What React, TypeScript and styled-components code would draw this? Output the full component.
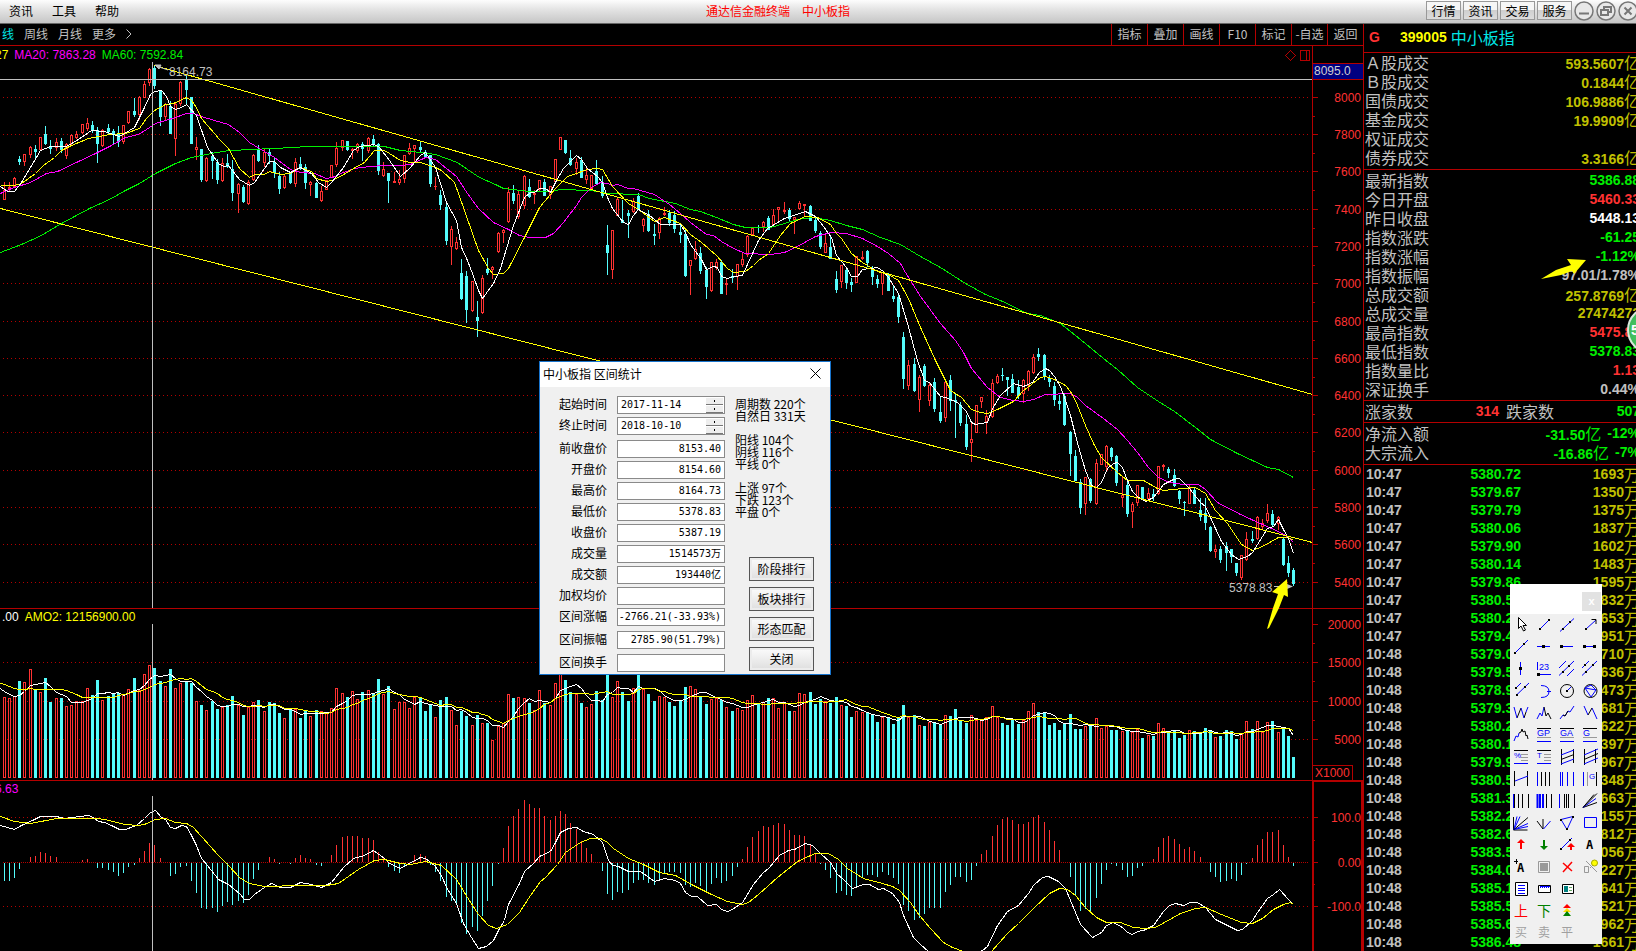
import React from "react";
import styled, { createGlobalStyle } from "styled-components";

/* ---------- market data, in chart units ---------- */

// One candle per entry: direction, high, body top, body bottom, low.
const CANDLES = `
u182 190 200 200|u182 187 189 191|u177 178 187 188|d156 159 162 165|u154 154 162 166|u146 147 155 158|d145 149 152 158|u137 137 150 150
d126 134 144 145|d140 147 149 154|u138 142 148 151|d138 141 150 153|u143 144 156 159|u134 135 144 145|u131 134 138 139|u124 124 133 134
u118 123 129 131|d121 125 130 133|d127 130 144 163|u129 130 146 147|d124 128 132 135|d129 131 134 144|d126 134 142 147|u125 125 142 144
u111 111 123 124|d98 111 115 117|u96 97 115 120|u81 84 98 98|u68 69 83 86|d65 68 86 89|d90 90 117 126|u103 104 117 120
d101 106 134 134|u103 104 139 156|u81 82 104 106|d76 80 90 105|d97 97 144 144|u137 147 150 160|d149 149 180 182|u157 158 181 182
d152 156 161 179|d159 162 180 184|u158 163 181 182|d154 163 167 168|d160 169 193 201|u183 184 194 213|d185 187 202 203|u180 182 204 205
u154 155 180 181|d145 150 161 162|u149 152 163 167|d148 152 156 164|d158 162 173 178|d172 176 189 194|u175 176 188 189|d172 173 183 184
u158 162 184 187|d157 164 168 170|d164 167 183 189|u181 182 185 196|d182 183 198 198|u186 191 201 202|u180 180 190 190|u165 165 178 178
u142 148 165 167|u140 140 148 151|d141 141 150 151|u148 149 151 159|u143 144 151 153|d142 144 149 161|u137 138 151 153|d135 139 144 146
d143 144 171 175|u162 169 176 177|d173 173 181 203|u172 181 183 183|u170 179 183 185|u155 155 179 183|u143 148 154 155|u145 145 149 163
d141 147 150 152|d150 152 157 157|d155 155 184 187|u177 186 187 190|d190 195 205 210|d202 207 241 245|u226 229 247 265|u237 242 249 250
d259 273 299 300|d271 276 310 323|u281 281 311 312|d301 317 321 337|u275 278 313 314|d258 269 273 275|u266 267 270 279|u232 233 252 253
u229 230 233 243|u187 192 222 223|d185 193 201 204|u190 194 217 219|u175 176 206 209|d179 187 197 198|u190 193 195 204|u180 180 190 191
d179 182 196 196|u186 186 195 199|u159 159 182 183|u137 137 150 150|d140 140 153 154|d150 158 165 166|u158 162 169 175|d157 160 178 178
u168 175 180 184|u175 175 189 189|d160 171 184 184|d176 183 196 198|d225 245 253 275|u230 230 270 279|u198 199 216 216|d200 220 223 223
d210 213 216 238|u198 201 212 213|d193 196 210 210|u218 219 226 232|d210 214 231 232|d224 234 236 245|u217 218 233 239|u207 213 215 216
d210 213 223 226|d211 215 229 233|d225 232 235 243|d229 234 276 277|u260 260 266 295|u241 249 259 260|d247 253 271 274|d267 270 287 299
u262 262 291 292|u259 262 267 270|d260 262 294 294|u278 283 285 295|d269 276 278 283|u264 264 277 290|u253 259 265 267|u235 236 255 257
u228 228 235 235|d225 227 228 233|u221 222 227 232|d216 218 230 230|u209 215 225 225|u207 207 210 222|u202 210 212 214|d208 210 219 221
u217 217 220 234|u201 203 209 210|u204 204 206 216|d205 206 221 221|d216 220 231 233|d231 233 247 249|u234 243 253 253|d235 247 259 259
d271 279 290 293|u265 265 282 288|d268 270 283 289|d278 282 285 292|u256 256 283 283|u251 257 259 260|d250 251 263 267|d266 268 277 285
d275 279 284 288|u272 272 284 295|d273 275 291 291|d285 296 299 302|d295 297 317 323|d332 337 379 389|u360 365 386 390|d358 364 391 392
u375 377 400 412|d364 366 386 387|u382 385 401 406|d378 382 409 412|d397 412 421 423|u380 382 418 422|d375 380 401 411|d394 400 402 438
d402 405 423 426|d415 424 447 450|u422 439 443 462|u405 405 433 433|u397 397 402 408|u410 416 422 434|u379 383 417 418|u374 376 383 384
d368 375 376 381|d377 377 380 396|d374 379 393 393|d380 387 396 399|u379 380 394 403|u370 371 386 391|u354 357 373 374|d348 354 357 361
d354 355 376 380|d375 378 382 387|d382 386 400 406|d395 401 404 410|d393 396 425 426|d431 432 454 476|d450 456 481 481|d479 482 508 514
u477 477 504 515|d478 479 501 503|u459 463 504 505|u454 454 465 465|u445 446 467 470|d447 448 457 461|d455 456 483 486|u476 495 498 507
d482 485 514 517|u502 504 512 528|u485 485 503 506|d487 487 500 500|u488 493 499 500|d489 494 497 501|u466 466 494 495|u464 465 467 471
d467 469 473 478|d469 475 486 487|d490 491 499 504|d501 502 503 516|u484 487 504 504|d488 490 504 504|d498 510 517 521|d498 513 523 530
d526 527 551 552|u545 549 552 558|d546 549 560 563|d542 546 553 571|d549 549 557 563|d563 563 573 576|u555 555 578 580|u532 539 560 561
d531 539 541 543|u516 517 539 540|u519 523 527 529|u504 513 521 523|d510 514 525 526|u516 517 524 530|d537 539 565 566|d556 563 573 577
d568 570 584 586`
  .trim()
  .split(/[|\n]/)
  .map((c) => ({ up: c[0] === "u", v: c.slice(1).split(" ").map(Number) }));

// Turnover of the ten sessions before the first visible one, then the visible ones.
const EARLIER = [676, 676, 676, 676, 676, 680, 683, 685, 685, 704];
const VOLUME = `697 698 696 681 682 669 690 692 678 702 698 698 706 705 701 701 688 695 680 700 696 693 693 695 689 678 690 674 665 668
681 686 669 688 683 681 683 701 705 710 701 709 707 705 696 705 715 707 702 700 711 702 703 713 718 710 709 718 711 716
710 711 713 708 688 693 697 691 699 692 690 693 679 694 686 709 702 702 708 697 697 711 705 717 700 697 710 725 711 716
725 715 723 723 740 726 723 694 698 697 698 703 710 690 703 705 683 670 680 692 694 703 707 704 691 700 668 697 681 692
701 688 670 689 694 701 696 697 702 706 701 687 686 689 696 704 699 698 700 707 711 708 710 700 695 704 702 698 698 708
703 711 711 693 694 692 704 699 701 703 697 705 706 717 711 712 713 715 722 717 718 724 717 705 717 715 725 726 722 723
725 715 716 709 721 723 715 720 720 717 706 717 723 725 719 724 720 711 703 712 713 725 723 730 724 714 729 729 726 726
718 728 726 730 730 731 731 732 729 738 735 736 723 728 732 731 738 735 730 731 733 728 730 737 736 730 731 739 734 721
729 721 732 722 721 732 728 736 757`
  .split(/\s+/)
  .map(Number);

const MACD = `-18 -18 -15 -6 0 5 6 10 9 6 5 0 0 0 0 2 3 0 -5 -5 -7 -9 -13 -10 -4 -2 4 11 19 17 4 0 -13 -11 -4 -3 -18 -30 -45 -46
-45 -49 -43 -39 -42 -38 -40 -32 -16 -7 0 5 3 -1 0 -1 4 7 4 3 -2 -3 0 7 17 25 26 26 26 24 24 22 10 4 -4 -8 -10 -4 0 7
8 6 -2 -9 -18 -34 -38 -42 -60 -71 -64 -68 -53 -38 -23 -1 14 36 46 53 62 58 54 54 46 42 46 51 48 39 33 21 14 8 0 -8 -31
-37 -29 -30 -27 -20 -17 -17 -20 -22 -17 -10 -9 -9 -10 -22 -24 -20 -23 -28 -21 -15 -20 -18 -13 -4 3 15 25 31 36 35 37 39
38 32 27 27 26 18 9 -1 -7 -15 -30 -28 -32 -33 -24 -15 -12 -12 -14 -9 -12 -15 -21 -42 -48 -57 -55 -51 -45 -45 -45 -29 -22
-14 -14 -19 -17 -3 8 12 26 37 43 45 42 38 38 40 45 47 40 32 21 12 0 -14 -32 -48 -46 -48 -35 -21 -7 -1 -3 -7 -14 -13 -5
-3 0 3 15 24 26 23 18 13 15 11 5 0 -9 -14 -19 -18 -16 -18 -12 -1 4 17 23 30 30 32 17 5 -3`
  .split(/\s+/)
  .map(Number);

const MA5 =
  "0,186 7,191 14,191 21,182 30,167 40,150 50,146 66,146 78,139 91,130 104,131 119,136 134,127 144,107 150,94 154,91 161,90 166,96 170,106 175,109 181,107 186,104 196,115 207,147 218,163 223,166 228,165 239,179 249,185 254,182 264,168 269,161 274,161 280,167 290,172 300,167 311,173 318,182 326,187 331,182 343,167 353,150 359,146 374,144 379,147 389,160 400,176 410,167 420,155 425,152 435,167 446,202 456,220 461,247 467,260 472,273 478,290 482,298 493,283 500,268 513,225 524,197 530,192 534,192 539,188 545,188 550,192 555,182 563,168 576,155 581,159 587,168 597,176 602,182 607,197 612,208 623,222 628,224 633,215 638,209 649,215 660,224 680,224 685,232 690,244 701,259 706,269 713,266 717,267 721,276 727,278 733,276 742,275 747,264 758,240 767,228 784,218 805,211 815,216 820,222 831,237 836,255 846,267 851,276 857,276 862,269 877,267 883,271 888,277 898,293 907,323 917,360 924,380 929,382 940,396 945,397 957,402 966,411 971,422 975,424 987,422 992,408 1000,395 1013,383 1023,386 1032,382 1039,372 1045,368 1049,370 1054,376 1060,386 1065,400 1070,415 1075,435 1080,453 1085,470 1091,485 1096,487 1101,482 1107,468 1113,463 1117,462 1122,467 1127,480 1132,491 1137,496 1145,501 1153,497 1163,484 1173,479 1179,478 1189,488 1200,502 1205,506 1210,517 1215,528 1221,541 1231,554 1238,559 1247,556 1252,552 1262,536 1267,528 1273,526 1278,519 1283,529 1288,538 1293,553";
const MA10 =
  "0,185 14,185 21,183 35,173 43,165 54,157 61,150 71,145 88,138 109,134 125,133 139,128 146,118 154,110 165,104 173,103 186,97 191,100 196,107 201,118 214,133 219,139 228,148 239,168 249,177 254,174 264,174 269,171 280,174 290,173 300,167 311,171 316,178 326,181 332,180 345,173 353,168 364,162 374,150 384,150 389,153 400,160 410,162 420,162 435,167 441,170 454,182 464,210 472,233 478,250 488,268 493,274 503,273 508,268 524,237 539,207 555,188 567,176 576,173 587,169 597,168 602,169 612,186 628,203 638,209 654,221 664,217 680,223 690,234 701,242 716,255 727,268 733,272 745,271 753,265 758,260 768,253 780,235 790,223 805,216 817,217 830,224 836,233 841,238 851,253 862,262 877,271 888,274 898,280 908,298 920,327 935,360 945,380 950,390 961,397 971,409 980,412 987,413 997,409 1013,401 1023,390 1040,377 1045,376 1054,379 1065,385 1070,391 1075,400 1085,425 1093,443 1101,457 1117,472 1127,480 1143,480 1157,488 1163,490 1183,488 1195,487 1205,493 1215,510 1227,523 1241,544 1252,550 1262,546 1278,537 1288,537 1293,540";
const MA20 =
  "0,193 11,188 30,182 46,173 57,171 78,161 93,154 109,146 125,137 138,134 146,129 155,123 165,120 175,117 186,113 193,113 201,116 214,120 228,124 239,132 249,142 264,151 274,157 290,169 300,172 314,173 326,178 332,177 343,172 354,168 369,166 384,165 400,165 410,164 421,159 425,157 435,159 446,168 456,176 467,193 478,208 493,222 508,229 519,235 529,237 545,237 553,233 563,222 576,205 581,197 591,187 600,182 607,183 612,185 617,184 628,188 633,188 647,192 654,194 669,204 680,213 690,222 706,234 713,235 721,241 733,248 745,253 770,254 784,252 797,246 815,236 831,232 846,233 862,238 877,246 888,253 900,263 905,272 920,296 940,323 955,340 963,352 971,368 987,387 1000,397 1013,400 1023,401 1033,399 1045,394 1070,393 1077,397 1085,405 1103,418 1117,429 1127,440 1137,452 1148,467 1158,477 1169,482 1183,484 1198,484 1205,489 1217,502 1240,514 1262,524 1280,532 1288,537 1293,542";
const MA60 =
  "0,252 21,244 39,236 61,223 89,208 109,199 125,190 139,183 155,173 175,163 191,157 211,153 228,150 254,149 269,148 296,147 304,146 384,146 400,150 421,152 435,154 446,158 457,162 467,169 479,177 495,184 503,188 529,191 550,191 560,189 591,190 607,193 638,194 649,198 675,203 690,209 700,211 716,217 733,224 745,227 770,227 784,223 797,219 813,217 830,220 846,225 862,229 880,237 900,244 920,256 940,267 965,283 985,294 1000,300 1027,313 1040,315 1060,323 1080,339 1103,358 1117,369 1137,387 1158,401 1174,411 1195,427 1210,439 1237,453 1267,467 1278,469 1293,477";
const DIF =
  "0,825 7,827 14,829 21,825 32,820 40,816 56,816 64,818 88,815 93,817 98,821 104,822 111,825 119,829 125,829 136,825 144,818 150,812 155,810 161,817 165,819 170,827 175,828 181,825 186,826 191,835 196,845 201,858 207,865 218,879 228,884 239,893 244,899 249,899 254,894 264,887 271,883 280,887 290,887 300,882 311,884 321,887 331,882 343,867 353,858 364,855 373,850 384,858 389,863 400,868 407,864 420,857 425,858 434,865 441,875 446,887 456,903 463,923 471,937 478,948 486,946 493,940 498,930 504,920 508,904 519,883 524,871 534,862 539,856 550,851 555,842 560,832 568,828 576,827 583,831 593,834 602,842 608,860 612,865 618,866 628,871 640,871 654,881 664,878 675,880 680,883 685,892 691,896 697,896 707,905 716,904 721,909 727,911 732,909 742,902 753,884 763,872 768,868 779,855 788,850 794,849 805,843 812,845 820,853 830,862 837,874 842,878 852,888 863,884 869,884 878,889 883,888 892,893 899,902 903,915 913,937 920,944 928,951 940,956 970,956 982,950 987,946 997,925 1007,911 1018,905 1028,893 1033,885 1042,877 1048,876 1058,881 1065,888 1070,900 1075,912 1080,924 1092,937 1101,932 1106,925 1113,922 1122,927 1127,932 1132,934 1137,931 1143,930 1153,925 1163,911 1169,905 1175,903 1183,905 1190,902 1197,902 1205,907 1215,919 1227,925 1237,930 1242,929 1252,920 1257,912 1267,898 1273,894 1279,889 1288,899 1293,904";
const DEA =
  "0,816 14,821 30,823 56,818 98,818 109,820 124,824 138,825 144,824 155,819 165,818 175,822 186,823 193,827 201,836 218,855 228,865 239,877 249,883 264,886 300,885 326,885 338,883 358,869 374,860 384,859 400,863 410,864 425,861 441,865 456,879 467,897 478,914 488,925 496,928 507,924 519,912 530,895 540,881 545,877 557,864 565,852 580,842 590,838 600,838 607,842 613,848 628,858 643,864 659,872 675,875 693,885 711,894 727,901 742,904 748,902 758,894 777,877 797,861 810,855 815,853 828,853 838,859 847,868 863,878 882,883 892,886 899,890 910,902 919,915 930,928 943,942 952,947 963,951 975,954 991,951 1007,933 1018,923 1033,908 1049,893 1059,888 1067,889 1075,895 1085,907 1096,917 1106,922 1120,922 1133,927 1145,928 1155,927 1180,913 1195,908 1205,907 1221,914 1241,922 1252,923 1262,918 1273,909 1283,904 1290,902 1293,904";

const candleX = (i: number) => Math.floor(4 + 5.2 * i);

const averageLine = (days: number) => {
  const all = [...EARLIER, ...VOLUME];
  const points: string[] = [];
  for (let i = -1; i < VOLUME.length; i++) {
    const end = i + EARLIER.length + 1;
    const window = all.slice(end - days, end);
    const mean = window.reduce((a, b) => a + b, 0) / days;
    points.push(`${candleX(i)},${Math.round(mean)}`);
  }
  return points.join(" ");
};

const RED = "#ff3232";
const AXIS = "#b40000";
const CYAN = "#54fcfc";
const YELLOW = "#ffff00";
const MAGENTA = "#ff00ff";
const GREEN = "#00f000";
const GREY = "#c0c0c0";

/* ---------- styled parts ---------- */

const CJK = `"Noto Sans CJK SC", sans-serif`;

const Global = createGlobalStyle`
  * { box-sizing: border-box; }
  body { margin: 0; background: #000; font: 12px/16px ${CJK}; }
  button, input { font: inherit; margin: 0; }
  dl, dd, dt, h1, h2, p { margin: 0; font: inherit; }
`;

const Screen = styled.div`
  position: relative;
  height: 100vh;
  overflow: hidden;
  display: flex;
  flex-direction: column;
  background: #000;
`;

const TopBar = styled.header`
  flex: 0 0 24px;
  display: flex;
  align-items: center;
  padding-bottom: 2px;
  border-bottom: 1px solid #666;
  background: linear-gradient(#fdfdfd, #e4e4e4 40%, #c6c6c6);
`;

const Menu = styled.nav`
  flex: 0 0 130px;
  display: flex;
  gap: 19px;
  padding-left: 9px;
`;

const MenuButton = styled.button`
  border: 0;
  padding: 0;
  background: none;
  color: #000;
`;

const Title = styled.h1`
  flex: 1;
  display: flex;
  justify-content: center;
  gap: 12px;
  color: #f00;
`;

const TopActions = styled.div`
  display: flex;
  gap: 2px;
  margin-right: -2px;
  align-items: center;
`;

const TopButton = styled.button`
  width: 35px;
  height: 19px;
  border: 1px solid #999;
  padding: 0;
  line-height: 16px;
  color: #000;
  background: linear-gradient(#f6f6f6 50%, #cfcfcf 50%, #dcdcdc);
`;

const RoundButton = styled.button`
  width: 20px;
  height: 20px;
  border: 0;
  padding: 0;
  background: none;
  svg { display: block; }
`;

const Body = styled.div`
  flex: 1;
  min-height: 0;
  display: flex;
`;

const ChartColumn = styled.main`
  flex: 1;
  min-width: 0;
  display: grid;
  grid-template-rows: 22px minmax(0, 562fr) minmax(0, 172fr) minmax(0, 171fr);
`;

const Toolbar = styled.div`
  display: flex;
  justify-content: space-between;
  border-bottom: 1px solid ${AXIS};
`;

const Periods = styled.div`
  display: flex;
  align-items: center;
  gap: 10px;
  padding: 0 0 2px 2px;
`;

const PeriodButton = styled.button<{ $active?: boolean }>`
  border: 0;
  padding: 0;
  background: none;
  color: ${(p) => (p.$active ? "#00e6e6" : GREY)};
  svg { display: block; }
`;

const Tools = styled.div`
  display: flex;
`;

const ToolButton = styled.button`
  width: 36px;
  border: 0;
  border-left: 1px solid ${AXIS};
  padding: 0 0 2px;
  background: none;
  color: ${GREY};
  line-height: 16px;
  white-space: nowrap;
`;

const Pane = styled.section`
  position: relative;
  min-height: 0;
`;

const Legend = styled.div<{ $shift?: number }>`
  position: absolute;
  top: 0;
  left: 0;
  display: flex;
  gap: 6px;
  margin-left: ${(p) => p.$shift ?? 0}px;
  font: 12px/18px "Liberation Sans", sans-serif;
`;

const Ink = styled.span<{ $color: string }>`
  color: ${(p) => p.$color};
`;

const Plot = styled.svg`
  display: block;
  width: 100%;
  height: 100%;
  font: 12px "Liberation Sans", sans-serif;
`;

const Side = styled.aside`
  flex: 0 0 273px;
  overflow: hidden;
  border-left: 1px solid ${AXIS};
  font: 14px/19px "Liberation Sans", ${CJK};
`;

const SideInner = styled.div`
  margin-right: -4px;
`;

const SideTitle = styled.h2`
  display: flex;
  align-items: center;
  height: 29px;
  padding: 0 0 2px 5px;
  border-bottom: 1px solid ${AXIS};
  font-weight: bold;
`;

const Flag = styled.span`
  width: 31px;
  color: ${RED};
`;

const Code = styled.span`
  color: ${YELLOW};
`;

const Name = styled.span`
  margin-left: 4px;
  font: 16px/19px ${CJK};
  color: #00e6e6;
`;

const Stats = styled.dl<{ $top?: number; $bottom: number }>`
  padding: ${(p) => p.$top ?? 0}px 0 ${(p) => p.$bottom}px 1px;
  border-bottom: 1px solid ${AXIS};
`;

const Stat = styled.div`
  display: flex;
  justify-content: space-between;
  height: 19px;
`;

const StatLabel = styled.dt`
  font: 16px/19px ${CJK};
  color: ${GREY};
  white-space: nowrap;
`;

const StatValue = styled.dd<{ $color: string }>`
  display: flex;
  gap: 6px;
  font-weight: bold;
  color: ${(p) => p.$color};
  white-space: nowrap;
`;

const Split = styled.div`
  display: grid;
  grid-template-columns: 134px 1fr;
  column-gap: 7px;
`;

const Unit = styled.span`
  font: 16px/18px ${CJK};
`;

const Ticks = styled.table`
  width: 100%;
  border-collapse: collapse;
  table-layout: fixed;
  line-height: 18px;
  font-weight: bold;
  td { padding: 0; height: 18px; line-height: 18px; white-space: nowrap; }
  tr { height: 18px; }
`;

const TimeCell = styled.td`
  width: 72px;
  text-indent: 2px;
  color: ${GREY};
`;

const PriceCell = styled.td`
  width: 85px;
  text-align: right;
  color: ${GREEN};
`;

const AmountCell = styled.td`
  text-align: right;
  color: #c0c000;
`;

const TickText = styled.div`
  display: flex;
  justify-content: flex-end;
  height: 18px;
`;

const Badge = styled.div`
  position: absolute;
  top: 306px;
  right: -39px;
  width: 48px;
  height: 48px;
  border: 2px solid #d8e8dc;
  border-radius: 50%;
  padding-left: 2px;
  background: radial-gradient(#5fd878, #2fae4c);
  color: #fff;
  font: bold 14px/44px "Liberation Sans", sans-serif;
`;

const Pointer = styled.svg<{ $top: number; $right: number }>`
  position: absolute;
  top: ${(p) => p.$top}px;
  right: ${(p) => p.$right}px;
  fill: ${YELLOW};
`;

const Dialog = styled.section`
  position: absolute;
  left: 539px;
  top: 361px;
  width: 292px;
  border: 1px solid #1874cd;
  background: #f0f0f0;
  color: #000;
`;

const DialogTitle = styled.header`
  display: flex;
  align-items: center;
  justify-content: space-between;
  height: 25px;
  padding: 0 9px 2px 3px;
  background: #fff;
`;

const CloseButton = styled.button`
  border: 0;
  padding: 0;
  background: none;
  svg { display: block; }
`;

const DialogBody = styled.div`
  display: flex;
  justify-content: space-between;
  padding: 9px 16px 2px 0;
`;

const Fields = styled.form`
  display: flex;
  flex-direction: column;
  gap: 5px;
`;

const FieldGroup = styled.div`
  display: flex;
  flex-direction: column;
  gap: 3px;
`;

const Field = styled.label`
  display: flex;
  justify-content: flex-end;
  align-items: center;
  gap: 10px;
  width: 185px;
  height: 18px;
  line-height: 16px;
`;

const FieldName = styled.span`
  padding-bottom: 2px;
`;

const Box = styled.span`
  display: flex;
  align-items: center;
  width: 108px;
  height: 18px;
  border: 1px solid #8a8a8a;
  background: #fff;
`;

const FieldInput = styled.input<{ $left?: boolean }>`
  flex: 1;
  min-width: 0;
  height: 16px;
  border: 0;
  outline: 0;
  padding: 0 3px 0 ${(p) => (p.$left ? 3 : 0)}px;
  background: transparent;
  font: 10px/16px "DejaVu Sans Mono", "Noto Sans CJK SC", monospace;
  text-align: ${(p) => (p.$left ? "left" : "right")};
`;

const Spinner = styled.span`
  display: flex;
  flex-direction: column;
  gap: 1px;
  margin-right: 1px;
`;

const SpinButton = styled.button`
  width: 17px;
  height: 7px;
  border: 0;
  border-bottom: 1px solid #777;
  padding: 0;
  background: #eee;
  svg { display: block; margin: 0 auto; }
`;

const DialogSide = styled.div`
  display: flex;
  flex-direction: column;
  justify-content: space-between;
  width: 80px;
`;

const Counts = styled.div`
  display: flex;
  flex-direction: column;
  gap: 12px;
  padding: 2px 0 0 1px;
  line-height: 12px;
`;

const Actions = styled.div`
  display: flex;
  flex-direction: column;
  gap: 6px;
  align-items: flex-end;
  padding-bottom: 1px;
`;

const ActionButton = styled.button`
  width: 65px;
  height: 24px;
  border: 1px solid #555;
  padding: 0 0 1px;
  background: linear-gradient(#fcfcfc, #dedede);
  box-shadow: inset 0 0 0 2px #ececec;
  line-height: 18px;
  color: #000;
`;

const Palette = styled.section`
  position: absolute;
  top: 584px;
  right: 34px;
  width: 92px;
  background: #f0f0f0;
`;

const PaletteBar = styled.header`
  display: flex;
  justify-content: flex-end;
  align-items: center;
  height: 30px;
  padding: 4px 1px 0 0;
  background: #fff;
`;

const PaletteClose = styled.button`
  width: 19px;
  height: 19px;
  border: 0;
  padding: 0;
  background: #e2e2e2;
  color: #fff;
  font: bold 11px/16px "Liberation Sans", sans-serif;
`;

const PaletteGrid = styled.div`
  display: grid;
  grid-template-columns: repeat(4, 23px);
  grid-auto-rows: 22px;
`;

const PaletteButton = styled.button`
  border: 0;
  padding: 0;
  background: none;
  svg { display: block; }
`;

/* ---------- charts ---------- */

const Line = ({ points, color }: { points: string; color: string }) => (
  <polyline points={points} fill="none" stroke={color} transform="translate(0.5 0.5)" />
);

const GridLine = ({ y, dash = "1 3" }: { y: number; dash?: string }) => (
  <line x1="3" x2="1309" y1={y + 0.5} y2={y + 0.5} stroke="#b40000" strokeDasharray={dash} />
);

const AxisMark = ({ y, label }: { y: number; label?: string }) => (
  <g>
    <rect x="1312" y={y} width={label ? 6 : 3} height="1" fill={AXIS} />
    {label && (
      <text x="1361" y={y + 5} textAnchor="end" fill={RED}>
        {label}
      </text>
    )}
  </g>
);

const PRICE_LEVELS: [number, string][] = [
  [97, "8000"], [134, "7800"], [171, "7600"], [209, "7400"], [246, "7200"], [283, "7000"], [321, "6800"],
  [358, "6600"], [395, "6400"], [432, "6200"], [470, "6000"], [507, "5800"], [544, "5600"], [582, "5400"],
];

function PriceChart() {
  return (
    <Plot viewBox="0 46 1363 562" preserveAspectRatio="xMaxYMid meet" role="img" aria-label="K线图">
      <g shapeRendering="crispEdges">
        {PRICE_LEVELS.map(([y]) => (
          <GridLine key={y} y={y} />
        ))}
        <rect x="1312" y="46" width="1" height="562" fill={AXIS} />
        {CANDLES.map(({ up, v: [hi, top, bottom, lo] }, i) => {
          const x = candleX(i);
          const color = up ? RED : CYAN;
          return (
            <g key={i}>
              <rect x={x} y={hi} width="1" height={lo - hi} fill={color} />
              <rect x={x - 1} y={top} width="3" height={Math.max(1, bottom - top)} fill={color} />
              {up && bottom - top > 2 && (
                <rect x={x} y={top + 1} width="1" height={bottom - top - 2} fill="#000" />
              )}
            </g>
          );
        })}
        <Line points={MA60} color={GREEN} />
        <Line points={MA20} color={MAGENTA} />
        <Line points={MA10} color={YELLOW} />
        <Line points={MA5} color="#fff" />
        <Line points="154,65 1312,394" color={YELLOW} />
        <Line points="0,208 1312,542" color={YELLOW} />
        <rect x="0" y="79" width="1312" height="1" fill={GREY} />
        <rect x="152" y="62" width="1" height="546" fill={GREY} />
        <path d="M1290.5 50.5l5 5-5 5-5-5zM1300.5 50.5h9v10h-9zM1306.5 50.5v10" fill="none" stroke={AXIS} />
        <rect x="1313" y="63" width="50" height="16" fill="#000080" />
        <path d="M1312 63.5h51M1312 79.5h51" stroke={AXIS} />
        {PRICE_LEVELS.slice(0, -1).map(([y]) => (
          <AxisMark key={y} y={y + 19} />
        ))}
      </g>
      {PRICE_LEVELS.map(([y, label]) => (
        <AxisMark key={label} y={y} label={label} />
      ))}
      <text x="1314" y="75" fill="#d0d0d0">8095.0</text>
      <text x="169" y="76" fill={GREY}>8164.73</text>
      <path d="M156 66l12 4M155 65l6 0-2 4z" stroke={GREY} fill={GREY} />
      <text x="1229" y="592" fill={GREY}>5378.83</text>
      <path d="M1274 586.5h16" stroke={GREY} />
      <path d="M1287 584l6 2.500-6 2.500z" fill={GREY} />
    </Plot>
  );
}

function VolumeChart() {
  return (
    <Plot viewBox="0 608 1363 172" preserveAspectRatio="xMaxYMid meet" role="img" aria-label="成交额">
      <g shapeRendering="crispEdges">
        <rect x="0" y="608" width="1363" height="1" fill={AXIS} />
        {[662, 701, 739].map((y) => (
          <GridLine key={y} y={y} />
        ))}
        <rect x="1312" y="608" width="1" height="172" fill={AXIS} />
        {VOLUME.map((top, i) => {
          const x = candleX(i);
          const up = CANDLES[i].up;
          return (
            <g key={i}>
              <rect x={x - 1} y={top} width="3" height={778 - top} fill={up ? RED : CYAN} />
              {up && <rect x={x} y={top + 1} width="1" height={776 - top} fill="#000" />}
            </g>
          );
        })}
        <Line points={averageLine(5)} color="#fff" />
        <Line points={averageLine(10)} color={YELLOW} />
        <rect x="152" y="624" width="1" height="156" fill={GREY} />
        {[643, 681, 720].map((y) => (
          <AxisMark key={y} y={y} />
        ))}
        <path d="M1312 765.5h40.500V780" fill="none" stroke={AXIS} />
      </g>
      <AxisMark y={624} label="20000" />
      <AxisMark y={662} label="15000" />
      <AxisMark y={701} label="10000" />
      <AxisMark y={739} label="5000" />
      <text x="1315" y="777" fill={RED}>X1000</text>
    </Plot>
  );
}

function MacdChart() {
  return (
    <Plot viewBox="0 780 1363 171" preserveAspectRatio="xMaxYMid meet" role="img" aria-label="MACD">
      <g shapeRendering="crispEdges">
        <rect x="0" y="780" width="1363" height="1" fill={AXIS} />
        <GridLine y={817} />
        <GridLine y={862} dash="1 1" />
        <GridLine y={906} />
        <path d="M1313 951V781h49v170" fill="none" stroke={AXIS} strokeWidth="2" />
        {MACD.map((v, i) =>
          v === 0 ? null : (
            <rect
              key={i}
              x={candleX(i)}
              y={v > 0 ? 862 - v : 863}
              width="1"
              height={Math.abs(v)}
              fill={v > 0 ? RED : CYAN}
            />
          )
        )}
        <Line points={DIF} color="#fff" />
        <Line points={DEA} color={YELLOW} />
        <rect x="152" y="796" width="1" height="155" fill={GREY} />
        <AxisMark y={840} />
        <AxisMark y={884} />
      </g>
      <AxisMark y={817} label="100.0" />
      <AxisMark y={862} label="0.00" />
      <AxisMark y={906} label="-100.0" />
    </Plot>
  );
}

/* ---------- quote panel ---------- */

type Row = [string, string, string, string?];

const OLIVE = "#c0c000";
const TURNOVER: Row[] = [
  ["Ａ股成交", "593.5607", OLIVE, "亿"],
  ["Ｂ股成交", "0.1844", OLIVE, "亿"],
  ["国债成交", "106.9886", OLIVE, "亿"],
  ["基金成交", "19.9909", OLIVE, "亿"],
  ["权证成交", "", OLIVE],
  ["债券成交", "3.3166", OLIVE, "亿"],
];
const INDEX: Row[] = [
  ["最新指数", "5386.88", GREEN],
  ["今日开盘", "5460.33", RED],
  ["昨日收盘", "5448.13", "#fff"],
  ["指数涨跌", "-61.25", GREEN],
  ["指数涨幅", "-1.12%", GREEN],
  ["指数振幅", "97.01/1.78%", GREY],
  ["总成交额", "257.8769", OLIVE, "亿"],
  ["总成交量", "27474272", OLIVE],
  ["最高指数", "5475.84", RED],
  ["最低指数", "5378.83", GREEN],
  ["指数量比", "1.13", RED],
  ["深证换手", "0.44%", GREY],
];

const TICKS = (
  "5380.72 1693|5379.67 1350|5379.79 1375|5380.06 1837|5379.90 1602|5380.14 1483|5379.86 1595|5380.50 1832|5380.20 1653|5379.40 1951|" +
  "5379.00 1710|5379.50 1636|5378.90 1473|5379.30 1681|5380.20 1622|5380.10 1397|5379.90 1967|5380.50 1348|5381.30 1663|5382.20 1155|" +
  "5382.60 1812|5383.50 1056|5384.00 1227|5385.10 1641|5385.50 1521|5385.60 1962|5386.48 1661"
)
  .split("|")
  .map((t, i) => [i < 10 ? "10:47" : "10:48", ...t.split(" ")]);

const StatRow = ({ row: [label, value, color, unit] }: { row: Row }) => (
  <Stat>
    <StatLabel>{label}</StatLabel>
    <StatValue $color={color}>
      <span>
        {value}
        {unit && <Unit>{unit}</Unit>}
      </span>
    </StatValue>
  </Stat>
);

function QuotePanel() {
  return (
    <Side>
      <SideInner>
        <SideTitle>
          <Flag>G</Flag>
          <Code>399005</Code>
          <Name>中小板指</Name>
        </SideTitle>
        <Stats $bottom={2}>
          {TURNOVER.map((row) => (
            <StatRow key={row[0]} row={row} />
          ))}
        </Stats>
        <Stats $top={1} $bottom={1}>
          {INDEX.map((row) => (
            <StatRow key={row[0]} row={row} />
          ))}
        </Stats>
        <Stats $top={1} $bottom={1}>
          <Split>
            <StatRow row={["涨家数", "314", RED]} />
            <StatRow row={["跌家数", "507", GREEN]} />
          </Split>
        </Stats>
        <Stats $top={1} $bottom={2}>
          <Stat>
            <StatLabel>净流入额</StatLabel>
            <StatValue $color={GREEN}>
              <span>-31.50<Unit>亿</Unit></span>
              <span>-12%</span>
            </StatValue>
          </Stat>
          <Stat>
            <StatLabel>大宗流入</StatLabel>
            <StatValue $color={GREEN}>
              <span>-16.86<Unit>亿</Unit></span>
              <span>-7%</span>
            </StatValue>
          </Stat>
        </Stats>
        <Ticks>
          <tbody>
            {TICKS.map(([time, price, amount], i) => (
              <tr key={i}>
                <TimeCell>{time}</TimeCell>
                <PriceCell>{price}</PriceCell>
                <AmountCell>
                  <TickText>
                    {amount}
                    <Unit>万</Unit>
                  </TickText>
                </AmountCell>
              </tr>
            ))}
          </tbody>
        </Ticks>
      </SideInner>
    </Side>
  );
}

/* ---------- interval statistics dialog ---------- */

const FIELD_GROUPS: [string, string][][] = [
  [["起始时间", "2017-11-14"], ["终止时间", "2018-10-10"]],
  [
    ["前收盘价", "8153.40"], ["开盘价", "8154.60"], ["最高价", "8164.73"], ["最低价", "5378.83"], ["收盘价", "5387.19"],
    ["成交量", "1514573万"], ["成交额", "193440亿"], ["加权均价", ""], ["区间涨幅", "-2766.21(-33.93%)"],
  ],
  [["区间振幅", "2785.90(51.79%)"]],
  [["区间换手", ""]],
];

const COUNTS = [
  ["周期数 220个", "自然日 331天"],
  ["阳线 104个", "阴线 116个", "平线 0个"],
  ["上涨 97个", "下跌 123个", "平盘 0个"],
];

function StatsDialog() {
  return (
    <Dialog role="dialog" aria-label="中小板指 区间统计">
      <DialogTitle>
        <span>中小板指 区间统计</span>
        <CloseButton aria-label="关闭窗口">
          <svg width="11" height="11" viewBox="0 0 11 11">
            <path d="M.5.5l10 10M10.500.5l-10 10" stroke="#000" />
          </svg>
        </CloseButton>
      </DialogTitle>
      <DialogBody>
        <Fields>
          {FIELD_GROUPS.map((group, g) => (
            <FieldGroup key={g}>
              {group.map(([label, value]) => (
                <Field key={label}>
                  <FieldName>{label}</FieldName>
                  <Box>
                    <FieldInput $left={g === 0} defaultValue={value} />
                    {g === 0 && (
                      <Spinner>
                        {["增加", "减少"].map((name) => (
                          <SpinButton key={name} type="button" aria-label={name}>
                            <svg width="3" height="2" viewBox="0 0 3 2">
                              <path d="M1 0h1v2h-1z" fill="#000" />
                            </svg>
                          </SpinButton>
                        ))}
                      </Spinner>
                    )}
                  </Box>
                </Field>
              ))}
            </FieldGroup>
          ))}
        </Fields>
        <DialogSide>
          <Counts>
            {COUNTS.map((group) => (
              <div key={group[0]}>
                {group.map((line) => (
                  <p key={line}>{line}</p>
                ))}
              </div>
            ))}
          </Counts>
          <Actions>
            {["阶段排行", "板块排行", "形态匹配", "关闭"].map((name) => (
              <ActionButton key={name}>{name}</ActionButton>
            ))}
          </Actions>
        </DialogSide>
      </DialogBody>
    </Dialog>
  );
}

/* ---------- drawing palette ---------- */

const B = "#0000ff";
const P = ({ d, c = B, w = 1 }: { d: string; c?: string; w?: number }) => (
  <path d={d} stroke={c} strokeWidth={w} fill="none" />
);
const Dots = ({ at }: { at: [number, number][] }) => (
  <>
    {at.map(([x, y]) => (
      <rect key={`${x}-${y}`} x={x - 1} y={y - 1} width="2" height="2" fill="#000" />
    ))}
  </>
);
const T = ({ x, y, children, c = B, s = 9 }: { x: number; y: number; children: string; c?: string; s?: number }) => (
  <text x={x} y={y} fill={c} fontSize={s} fontFamily={`"Liberation Sans", ${CJK}`}>
    {children}
  </text>
);
const Banded = ({ label, short }: { label: string; short?: boolean }) => (
  <>
    <P d="M4 4.500h14" c="#000" />
    <P d={short ? "M11 8.500h7M11 11.500h7M11 14.500h7" : "M4 13.500h14"} c="#999" />
    <P d="M4 17.500h14" />
    <T x={4} y={12} s={short ? 8 : 9}>{label}</T>
  </>
);

const ICONS: [string, React.ReactNode][] = [
  ["选择", <path d="M8.500 3.500v11l2.500-2.500 2.500 5 2-1-2.500-4.500h3.500z" fill="#fff" stroke="#000" />],
  ["线段", <><P d="M7 15l9-9" /><Dots at={[[7, 15], [16, 6]]} /></>],
  ["直线", <><P d="M4 17.500l14-13" /><Dots at={[[7, 15], [14, 8]]} /></>],
  ["箭头", <><P d="M7 15l10-9" /><P d="M12.500 5.500h4.500v4.500" c="#000" /><Dots at={[[7, 15]]} /></>],
  ["射线", <><P d="M5 17l13-13" /><Dots at={[[5, 17], [14, 8]]} /></>],
  ["水平直线", <><P d="M4 10.500h13" /><rect x="9" y="9" width="3" height="3" /></>],
  ["水平射线", <><P d="M4 10.500h13" /><rect x="4" y="9" width="3" height="3" /></>],
  ["水平线段", <><P d="M4 10.500h13" /><rect x="4" y="9" width="3" height="3" /><rect x="14" y="9" width="3" height="3" /></>],
  ["垂直线", <><P d="M10.500 4v13" /><rect x="9" y="9" width="3" height="3" /></>],
  ["价格标注", <><P d="M4.500 4v8M5 16.500h13" /><T x={6} y={12}>23</T><rect x="4" y="15" width="3" height="3" /></>],
  ["平行线组", <><P d="M3 10l7-7M3 17.500l15-14.500M11 18l7-7" /><Dots at={[[7, 14], [13, 8]]} /></>],
  ["平行直线", <><P d="M3 10l7-7M3 17.500l15-14.500" /><Dots at={[[7, 14], [14, 7], [6, 7]]} /></>],
  ["平行射线", <><P d="M5 9l6-6M6 15.500l13-12.500" /><Dots at={[[6, 8], [7, 15], [15, 7]]} /></>],
  ["圆弧", <><P d="M8 5.500q8 0 8 6t-8 6" /><P d="M14 11.500h4" /></>],
  ["圆", <><circle cx="11" cy="11" r="6.500" fill="none" stroke="#000" /><P d="M11 11l4-4" /><Dots at={[[11, 11]]} /></>],
  ["外接圆", <><circle cx="11.500" cy="11" r="6.500" fill="none" stroke="#000" /><P d="M6 8l11 2-5 7zM6 8l6-3 5 5" /></>],
  ["W形", <><P d="M7 16l4-10M14 16l2-6" c="#000" /><P d="M4 5l3 11M11 6l3 10M16 10l2-5" /></>],
  ["头肩形", <><P d="M4 17l3-6 2 3 2-9" /><P d="M11 5l2 9 2-3 3 6" c="#000" /></>],
  ["上升浪", <><P d="M4 17l3-4 2 1 3-5 2 1 4-6" /><P d="M7 13l2 1 3-5" c="#000" /></>],
  ["下降浪", <><P d="M5 4l4 9M13 6l5 11" /><P d="M9 13l4-7" c="#000" /></>],
  ["波浪", <><P d="M4 17l2-5 2 1 1-4" /><P d="M9 9l2-1 1-3 1 3 2-1 1 5 1-1 1 4" c="#000" /></>],
  ["黄金价位", <Banded label="GP" />],
  ["黄金目标", <Banded label="GA" />],
  ["黄金分割", <Banded label="G" />],
  ["百分比线", <Banded label="%" short />],
  ["等分线", <Banded label="T" short />],
  ["线性回归", <><P d="M5.500 3v16M17.500 3v14" c="#000" /><P d="M5 9l13-5M5 18l13-5" /><P d="M5 13.500l13-5" c="#000" /></>],
  ["回归通道", <><P d="M5.500 3v16M16.500 3v14" c="#000" /><P d="M5 9l14-6M5 18l14-6" /><P d="M5 13.500l14-6" c="#000" /></>],
  ["回归线", <><P d="M4.500 3v15M17.500 3v15" c="#000" /><P d="M5 13l13-5" /></>],
  ["周期线", <><P d="M4.500 4v14" /><P d="M8.500 4v14M12.500 4v14M16.500 4v14" c="#000" /></>],
  ["斐波那契", <P d="M4.500 4v14M6.500 4v14M11.500 4v14M17.500 4v14" />],
  ["时空尺", <><P d="M4.500 4v14" /><P d="M8.500 4v14" c="#999" /><T x={10} y={11} s={8}>G</T><P d="M17.500 4v14" c="#000" /></>],
  ["江恩时间", <><P d="M3.500 4v14" /><P d="M4.500 4v14M8.500 4v14M12.500 4v14M18.500 4v14" c="#000" /></>],
  ["阳历线", <><P d="M4.500 4v14M7 4v14M10 4v14" w={2} /><P d="M13.500 4v14M18.500 4v14" c="#000" /></>],
  ["阴历线", <><P d="M3.500 4v14" /><P d="M8.500 4v14M10.500 4v14M12.500 4v14M18.500 4v14" c="#000" /></>],
  ["阻速线", <><P d="M4 17.500l14-5M4 17.500l11-13" c="#000" /><P d="M4 17.500l13-9" /><P d="M4 17.500l14-14" c="#000" /></>],
  ["江恩角度", <><P d="M3.500 5v13h14" c="#000" /><P d="M4 17.500l3-13M4 17.500l6-13M4 17.500l14-6M4 17.500l14-3" /><P d="M4 17.500l14-12" c="#000" /></>],
  ["角度线", <><P d="M4 9l6 8V7" c="#000" /><P d="M10.500 17l7-8" /></>],
  ["三角形", <><P d="M5 7.500l12-3-6 13z" /><Dots at={[[5, 8], [17, 5], [11, 17]]} /></>],
  ["矩形", <P d="M5.500 5.500h12v10h-12z" />],
  ["上升标记", <path d="M11 5l4 4h-3v6h-2V9H7z" fill="red" />],
  ["下降标记", <path d="M11 16l4-4h-3V6h-2v6H7z" fill="green" />],
  ["线上标记", <><P d="M5 15l11-11" /><path d="M15 9l4 4h-3v3h-2v-3h-3z" fill="red" /><Dots at={[[5, 15], [14, 6]]} /></>],
  ["文字", <text x="7" y="15" fontSize="12" fontWeight="bold" fontFamily="DejaVu Sans Mono">A</text>],
  ["文字注释", <><P d="M4 5.500h4M6.500 3v5" c="#000" /><text x="7" y="16" fontSize="12" fontWeight="bold" fontFamily="DejaVu Sans Mono">A</text></>],
  ["填充", <><path d="M5.500 5.500h11v11h-11z" fill="none" stroke="#999" /><path d="M7 7h8v8h-8z" fill="#999" /></>],
  ["删除", <P d="M7 7l9 8M16 6l-9 10" c="red" w={1.5} />],
  ["显隐", <><path d="M5.500 10.500h4v6h-4zM7 5l11 11M18 5l-7 7" fill="none" stroke="#999" /><circle cx="15.500" cy="7" r="3" fill="#ff0" stroke="#aa0" /></>],
  ["列表", <><path d="M5.500 4.500h12v13h-12z" fill="#fff" stroke="#000" /><P d="M8 7.500h7M8 10.500h7M8 12.500h7M8 15.500h7" /></>],
  ["标尺", <><path d="M5.500 7.500h12v7h-12z" fill="#fff" stroke="#000" /><P d="M7 8.500h10M7.500 8v2M9.500 8v2M11.500 8v2M13.500 8v2M15.500 8v2" /></>],
  ["截图", <><path d="M6.500 6.500h11v9h-11z" fill="#fff" stroke="#000" /><rect x="8" y="8" width="4" height="6" fill="#008080" /><P d="M13 9.500h3M13 12.500h3" c="#6a6" /></>],
  ["", null],
  ["上", <T x={4} y={16} c="red" s={14}>上</T>],
  ["下", <T x={4} y={16} c="green" s={14}>下</T>],
  ["红绿灯", <><path d="M11 4l4 4h-8z" fill="red" /><path d="M11 8l4 4h-8z" fill="#fd0" /><path d="M11 11l4 5h-8z" fill="green" /></>],
  ["", null],
  ["买", <T x={5} y={15} c="#a0a0a0" s={12}>买</T>],
  ["卖", <T x={5} y={15} c="#a0a0a0" s={12}>卖</T>],
  ["平", <T x={5} y={15} c="#a0a0a0" s={12}>平</T>],
];

function DrawingPalette() {
  return (
    <Palette aria-label="画线工具">
      <PaletteBar>
        <PaletteClose aria-label="关闭画线工具">x</PaletteClose>
      </PaletteBar>
      <PaletteGrid>
        {ICONS.map(([name, icon], i) =>
          icon ? (
            <PaletteButton key={i} aria-label={name}>
              <svg width="23" height="22" viewBox="0 0 23 22">
                {icon}
              </svg>
            </PaletteButton>
          ) : (
            <span key={i} />
          )
        )}
      </PaletteGrid>
    </Palette>
  );
}

/* ---------- window frame ---------- */

const WINDOW_ICONS: [string, string][] = [
  ["最小化", "M5 12.500h10"],
  ["还原", "M8 9V6h7v5h-3M5 9h7v5h-7z"],
  ["关闭", "M6.500 6.500l7 7M13.500 6.500l-7 7"],
];

export default function App() {
  return (
    <Screen>
      <Global />
      <TopBar>
        <Menu>
          {["资讯", "工具", "帮助"].map((name) => (
            <MenuButton key={name}>{name}</MenuButton>
          ))}
        </Menu>
        <Title>
          <span>通达信金融终端</span>
          <span>中小板指</span>
        </Title>
        <TopActions>
          {["行情", "资讯", "交易", "服务"].map((name) => (
            <TopButton key={name}>{name}</TopButton>
          ))}
          {WINDOW_ICONS.map(([name, d]) => (
            <RoundButton key={name} aria-label={name}>
              <svg width="20" height="20" viewBox="0 0 20 20" fill="none" stroke="#777">
                <circle cx="10" cy="10" r="9" fill="#e8e8e8" strokeWidth="1.500" />
                <path d={d} strokeWidth="2" />
              </svg>
            </RoundButton>
          ))}
        </TopActions>
      </TopBar>
      <Body>
        <ChartColumn>
          <Toolbar>
            <Periods>
              <PeriodButton $active>线</PeriodButton>
              <PeriodButton>周线</PeriodButton>
              <PeriodButton>月线</PeriodButton>
              <PeriodButton>更多</PeriodButton>
              <PeriodButton aria-label="展开">
                <svg width="6" height="10" viewBox="0 0 6 10">
                  <path d="M.5.5L5 5 .5 9.500" fill="none" stroke={GREY} />
                </svg>
              </PeriodButton>
            </Periods>
            <Tools>
              {["指标", "叠加", "画线", "F10", "标记", "-自选", "返回"].map((name) => (
                <ToolButton key={name}>{name}</ToolButton>
              ))}
            </Tools>
          </Toolbar>
          <Pane>
            <PriceChart />
            <Legend $shift={-5}>
              <Ink $color={YELLOW}>27</Ink>
              <Ink $color={MAGENTA}>MA20: 7863.28</Ink>
              <Ink $color={GREEN}>MA60: 7592.84</Ink>
            </Legend>
          </Pane>
          <Pane>
            <VolumeChart />
            <Legend $shift={2}>
              <Ink $color="#fff">.00</Ink>
              <Ink $color={YELLOW}>AMO2: 12156900.00</Ink>
            </Legend>
          </Pane>
          <Pane>
            <MacdChart />
            <Legend $shift={-5}>
              <Ink $color={MAGENTA}>6.63</Ink>
            </Legend>
          </Pane>
        </ChartColumn>
        <QuotePanel />
      </Body>
      <StatsDialog />
      <DrawingPalette />
      <Badge>5</Badge>
      <Pointer $top={258} $right={49} width="46" height="22" viewBox="0 0 46 22" aria-hidden="true">
        <path d="M45 2L26 1L30 7L15 12L0 21L20 17L31 13L33 16z" />
      </Pointer>
      <Pointer $top={578} $right={346} width="24" height="52" viewBox="0 0 24 52" aria-hidden="true">
        <path d="M21 1L6 14L12 16L7 30L1 51L3 50L13 30L18 17L22 19z" />
      </Pointer>
    </Screen>
  );
}
